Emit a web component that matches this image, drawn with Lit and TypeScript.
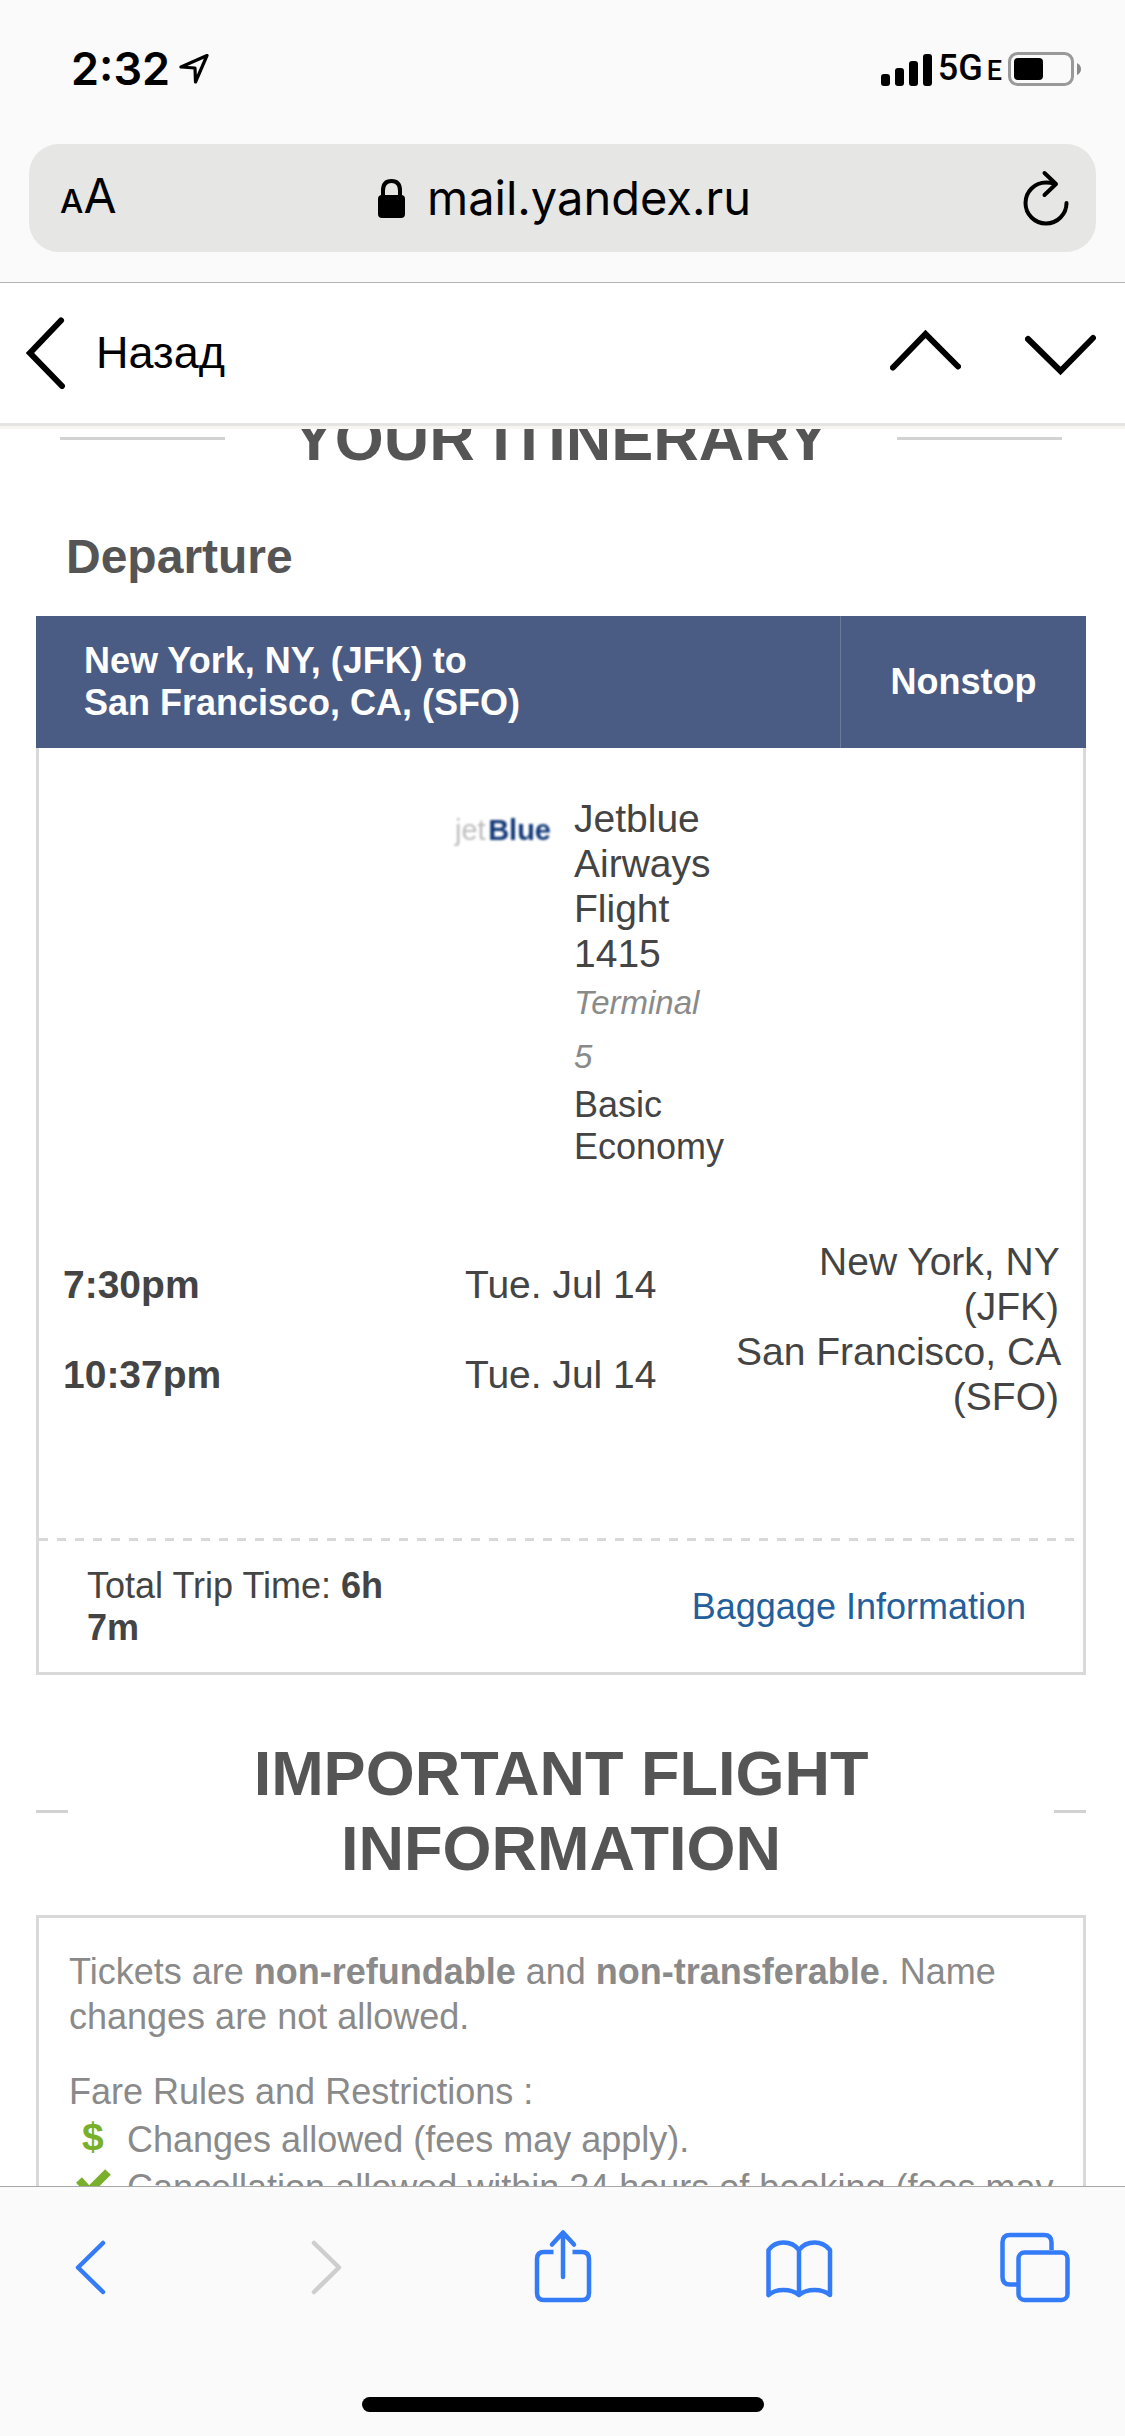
import { LitElement, html, css, svg } from "lit";
import { customElement } from "lit/decorators.js";

interface Stop {
  time: string;
  date: string;
  city: string;
  code: string;
}

const STOPS: Stop[] = [
  { time: "7:30pm", date: "Tue. Jul 14", city: "New York, NY", code: "(JFK)" },
  { time: "10:37pm", date: "Tue. Jul 14", city: "San Francisco, CA", code: "(SFO)" },
];

const TOOLS = [
  { label: "Back", cls: "tool", art: svg`<path d="M49 15 L24 39.500 L49 64"/>` },
  { label: "Forward", cls: "tool tool-off", art: svg`<path d="M24 15 L49 39.500 L24 64"/>` },
  {
    label: "Share",
    cls: "tool",
    art: svg`<path stroke-linecap="butt" d="M26.500 24 H17 Q10 24 10 31 V65 Q10 72 17 72 H55 Q62 72 62 65 V31 Q62 24 55 24 H45.500"/><path d="M36 49 V5 M25 16.500 L36 4.500 L47 16.500"/>`,
  },
  {
    label: "Bookmarks",
    cls: "tool",
    art: svg`<path d="M5.500 67 V22 Q11 14.500 20.500 14.500 Q30.500 14.500 36 22 Q41.500 14.500 51.500 14.500 Q61 14.500 67 22 V67 Q61 62 51.500 62 Q42 62 36 67 Q30 62 20.500 62 Q11 62 5.500 67 M36 22 V67"/>`,
  },
  {
    label: "Tabs",
    cls: "tool",
    art: svg`<path stroke-linecap="butt" d="M18 56.500 H11 Q3.500 56.500 3.500 49 V14.500 Q3.500 7 11 7 H45 Q52.500 7 52.500 14.500 V22"/><rect x="19.500" y="24.500" width="49" height="47.500" rx="6"/>`,
  },
];

@customElement("status-bar")
export class StatusBar extends LitElement {
  static styles = css`
    :host {
      display: flex;
      justify-content: space-between;
      align-items: center;
      height: 138px;
      padding: 0 43px 0 71px;
      box-sizing: border-box;
      color: #000;
      font-family: Inter, "Liberation Sans", sans-serif;
    }
    .group {
      display: flex;
      align-items: center;
    }
    .clock {
      font-size: 45px;
      font-weight: 600;
      line-height: 54px;
      margin-right: 9px;
    }
    .net {
      font-family: Roboto, "Liberation Sans", sans-serif;
      font-size: 36px;
      font-weight: 500;
      line-height: 36px;
      margin: 0 6px;
    }
    .net-small {
      font-size: 27px;
      margin-left: 4px;
    }
    svg {
      display: block;
    }
  `;
  render() {
    return html`
      <div class="group">
        <span class="clock">2:32</span>
        <svg width="30" height="32" viewBox="0 0 30 32" fill="none" stroke="#000" stroke-width="3.200" stroke-linejoin="round">
          <path d="M28 2.500 L2 14 L16 15 L16.500 29 Z" />
        </svg>
      </div>
      <div class="group">
        <svg width="51" height="33" viewBox="0 0 51 33">
          <rect x="0" y="21" width="9" height="12" rx="3" />
          <rect x="14" y="15" width="9" height="18" rx="3" />
          <rect x="28" y="8" width="9" height="25" rx="3" />
          <rect x="42" y="1" width="9" height="32" rx="3" />
        </svg>
        <span class="net">5G<span class="net-small">E</span></span>
        <svg width="74" height="34" viewBox="0 0 74 34">
          <rect x="1.500" y="1.500" width="63" height="31" rx="8" fill="none" stroke="#999" stroke-width="3" />
          <rect x="6" y="6" width="29" height="22" rx="4" />
          <path d="M69 11 Q73 13 73 17 Q73 21 69 23 Z" fill="#8a8a8a" />
        </svg>
      </div>
    `;
  }
}

@customElement("section-title")
export class SectionTitle extends LitElement {
  static styles = css`
    :host {
      display: flex;
      align-items: center;
    }
    .rule {
      flex: 0 0 var(--rule, 32px);
      height: 3px;
      background: #d2d2d2;
    }
    .title {
      flex: 1;
      margin: 0;
      text-align: center;
      font-size: 63px;
      font-weight: 700;
      line-height: 75px;
      color: #555;
    }
  `;
  render() {
    return html`<span class="rule"></span>
      <h2 class="title"><slot></slot></h2>
      <span class="rule"></span>`;
  }
}

@customElement("app-root")
export class AppRoot extends LitElement {
  static styles = css`
    :host {
      display: flex;
      flex-direction: column;
      height: 100vh;
      overflow: hidden;
      background: #fff;
      color: #444;
      font-family: "Liberation Sans", Arial, sans-serif;
    }
    button {
      appearance: none;
      border: 0;
      padding: 0;
      margin: 0;
      background: none;
      color: #000;
      font-family: inherit;
    }
    svg {
      display: block;
    }
    .browser {
      background: #fafafa;
      border-bottom: 1px solid #b2b2b2;
      padding-bottom: 30px;
    }
    .address {
      display: flex;
      align-items: center;
      justify-content: space-between;
      height: 108px;
      margin: 6px 29px 0;
      padding: 0 27px 0 31px;
      border-radius: 30px;
      background: #e6e6e4;
      font-family: Inter, "Liberation Sans", sans-serif;
    }
    .reader {
      flex: 0 0 60px;
      display: flex;
      align-items: baseline;
      font-size: 48px;
      line-height: 60px;
      font-weight: 400;
    }
    .reader-small {
      font-size: 33px;
      font-weight: 500;
    }
    .site {
      flex: 1;
      display: flex;
      align-items: center;
      justify-content: center;
      gap: 22px;
      font-size: 47px;
      line-height: 60px;
    }
    .reload {
      flex: 0 0 60px;
      display: flex;
      justify-content: flex-end;
    }
    .mailbar {
      display: flex;
      align-items: center;
      justify-content: space-between;
      height: 140px;
      padding: 0 29px 0 26px;
      border-bottom: 3px solid #e4e4e2;
      box-shadow: 0 3px 0 #f6f5f2;
      position: relative;
    }
    .back {
      display: flex;
      align-items: center;
      gap: 30px;
      font-size: 45px;
      line-height: 54px;
    }
    .pager {
      display: flex;
      gap: 64px;
    }
    .mail {
      flex: 1;
      min-height: 0;
      overflow: hidden;
      padding: 0 39px 0 36px;
    }
    .itinerary {
      --rule: 165px;
      margin: -25px 24px 54px;
    }
    .departure {
      margin: 0 0 32px 30px;
      font-size: 48px;
      line-height: 54px;
      color: #555;
    }
    .route {
      display: flex;
      background: #4b5c84;
      color: #fff;
      font-size: 36px;
      font-weight: 700;
      line-height: 42px;
    }
    .cities {
      flex: 1;
      padding: 24px 48px;
    }
    .stops {
      flex: 0 0 245px;
      display: flex;
      align-items: center;
      justify-content: center;
      border-left: 1px solid #6c7a9c;
    }
    .flight {
      border: 3px solid #d9d9d9;
      border-top: 0;
      padding-top: 48px;
    }
    .carrier {
      display: grid;
      grid-template-columns: 13fr 96px 180px 11fr;
      margin-bottom: 71px;
      font-size: 39px;
      line-height: 45px;
    }
    .logo {
      grid-column: 2;
      display: flex;
      justify-content: space-between;
      align-self: start;
      margin-top: 12px;
      font-size: 29px;
      line-height: 45px;
      color: #bdbdbd;
      filter: blur(1px);
    }
    .logo-blue {
      color: #133a78;
    }
    .plane {
      padding-left: 23px;
    }
    .terminal {
      display: block;
      font-size: 33px;
      line-height: 54px;
      color: #8a8a8a;
    }
    .fare {
      font-size: 36px;
      line-height: 42px;
    }
    .times {
      width: calc(100% - 48px);
      margin: 0 24px 119px;
      border-collapse: collapse;
      table-layout: fixed;
      font-size: 39px;
      line-height: 45px;
      text-align: left;
    }
    .times th,
    .times td {
      padding: 0;
    }
    .col-date {
      width: 264px;
    }
    .col-place {
      width: 330px;
    }
    .times .place {
      text-align: right;
    }
    .dashes {
      height: 3px;
      background: repeating-linear-gradient(90deg, #d9d9d9 0 9px, #fff 9px 18px);
    }
    .summary {
      display: flex;
      align-items: center;
      justify-content: space-between;
      padding: 24px 57px 23px 48px;
      font-size: 36px;
      line-height: 42px;
    }
    .total {
      max-width: 320px;
    }
    .bags {
      color: #245f9b;
      text-decoration: none;
    }
    .important {
      margin: 61px 0 29px;
    }
    .notes {
      border: 3px solid #d9d9d9;
      padding: 31px 24px 30px 30px;
      font-size: 36px;
      line-height: 45px;
      color: #8a8a8a;
    }
    .para {
      margin: 0 0 30px;
    }
    .rules-title {
      margin: 0;
    }
    .rules {
      list-style: none;
      margin: 2px 0 0;
      padding: 0;
      line-height: 48px;
    }
    .rule {
      display: grid;
      grid-template-columns: 58px 1fr;
    }
    .mark {
      color: #78b02c;
      font-size: 39px;
      font-weight: 700;
      line-height: 42px;
      padding-left: 13px;
    }
    .tick {
      margin: 4px 0 0 7px;
    }
    .toolbar {
      background: #fafafa;
      border-top: 1px solid #a8a8a8;
      padding: 41px 54px 24px;
      position: relative;
    }
    .tools {
      display: flex;
      justify-content: space-between;
      margin-bottom: 93px;
    }
    .tool {
      color: #347bf8;
    }
    .tool-off {
      color: #cecece;
    }
    .home {
      width: 402px;
      height: 15px;
      margin: 0 auto;
      border-radius: 8px;
      background: #000;
    }
  `;

  render() {
    return html`
      <header class="browser">
        <status-bar></status-bar>
        <div class="address">
          <button class="reader" aria-label="Page settings"><span class="reader-small">A</span>A</button>
          <button class="site">
            <svg width="27" height="39" viewBox="0 0 27 39">
              <rect x="0" y="16" width="27" height="23" rx="4" />
              <path d="M5 18 V11.500 Q5 2 13.500 2 Q22 2 22 11.500 V18" fill="none" stroke="#000" stroke-width="4" />
            </svg>
            mail.yandex.ru
          </button>
          <button class="reload" aria-label="Reload">
            <svg width="48" height="56" viewBox="0 0 48 56" fill="none" stroke="#000" stroke-width="4" stroke-linecap="round" stroke-linejoin="round">
              <path d="M45.500 33 A20.500 20.500 0 1 1 25 12.500 Q29 12.500 34 13.800" />
              <path d="M23.500 3 L35 14 L23.500 25" />
            </svg>
          </button>
        </div>
      </header>

      <nav class="mailbar">
        <button class="back">
          <svg width="40" height="72" viewBox="0 0 40 72" fill="none" stroke="#000" stroke-width="6" stroke-linecap="round">
            <path d="M35 3.500 L4 36 L36 69" />
          </svg>
          Назад
        </button>
        <div class="pager">
          <button aria-label="Previous">
            <svg width="71" height="46" viewBox="0 0 71 46" fill="none" stroke="#000" stroke-width="6" stroke-linecap="round">
              <path d="M3 37.500 L35.500 4 L68 36.500" />
            </svg>
          </button>
          <button aria-label="Next">
            <svg width="71" height="46" viewBox="0 0 71 46" fill="none" stroke="#000" stroke-width="6" stroke-linecap="round">
              <path d="M3 9 L35.500 41 L68 8" />
            </svg>
          </button>
        </div>
      </nav>

      <main class="mail">
        <section-title class="itinerary">YOUR ITINERARY</section-title>
        <h3 class="departure">Departure</h3>
        <div class="route">
          <div class="cities">New York, NY, (JFK) to<br />San Francisco, CA, (SFO)</div>
          <div class="stops">Nonstop</div>
        </div>
        <section class="flight">
          <div class="carrier">
            <div class="logo"><span>jet</span><b class="logo-blue">Blue</b></div>
            <div class="plane">
              <div>Jetblue Airways Flight 1415</div>
              <em class="terminal">Terminal<br />5</em>
              <div class="fare">Basic Economy</div>
            </div>
          </div>
          <table class="times">
            <colgroup>
              <col />
              <col class="col-date" />
              <col class="col-place" />
            </colgroup>
            <tbody>
              ${STOPS.map(
                (s) => html`<tr>
                  <th scope="row">${s.time}</th>
                  <td>${s.date}</td>
                  <td class="place">${s.city} ${s.code}</td>
                </tr>`
              )}
            </tbody>
          </table>
          <div class="dashes"></div>
          <div class="summary">
            <div class="total">Total Trip Time: <b>6h 7m</b></div>
            <a class="bags" href="#baggage">Baggage Information</a>
          </div>
        </section>

        <section-title class="important">IMPORTANT FLIGHT INFORMATION</section-title>
        <section class="notes">
          <p class="para">
            Tickets are <b>non-refundable</b> and <b>non-transferable</b>. Name changes are not allowed.
          </p>
          <p class="rules-title">Fare Rules and Restrictions :</p>
          <ul class="rules">
            <li class="rule">
              <span class="mark">$</span>
              <span>Changes allowed (fees may apply).</span>
            </li>
            <li class="rule">
              <svg class="tick" width="36" height="32" viewBox="0 0 36 32" fill="none" stroke="#78b02c" stroke-width="8">
                <path d="M3 12 L13 23 L32 4" />
              </svg>
              <span>Cancellation allowed within 24 hours of booking (fees may apply).</span>
            </li>
          </ul>
        </section>
      </main>

      <footer class="toolbar">
        <div class="tools">
          ${TOOLS.map(
            (t) => html`<button class=${t.cls} aria-label=${t.label}>
              <svg width="72" height="76" viewBox="0 0 72 76" fill="none" stroke="currentColor" stroke-width="4.500" stroke-linecap="round" stroke-linejoin="round">
                ${t.art}
              </svg>
            </button>`
          )}
        </div>
        <div class="home"></div>
      </footer>
    `;
  }
}
